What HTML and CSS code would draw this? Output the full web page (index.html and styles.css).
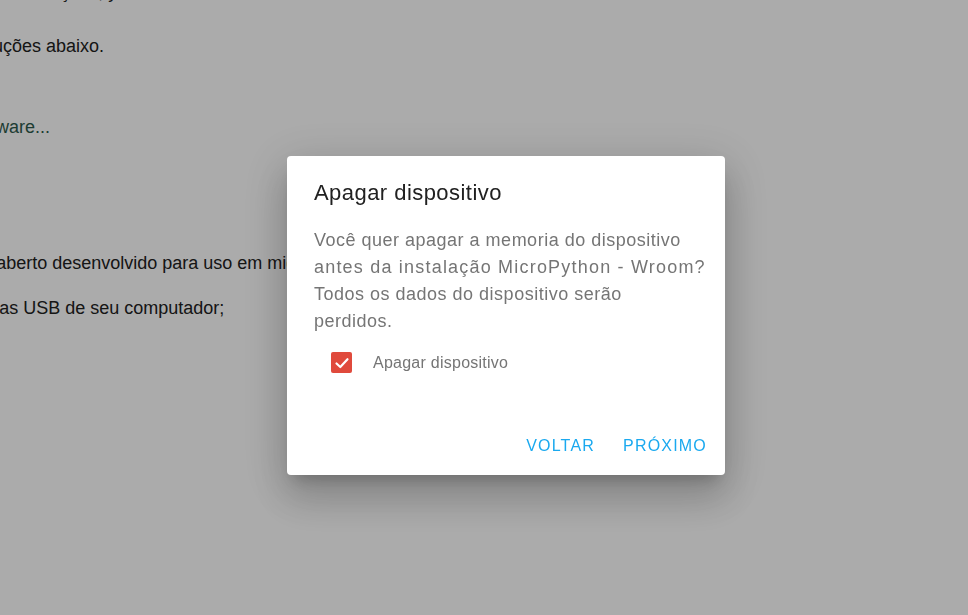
FILE: index.html
```html
<!DOCTYPE html>
<html lang="pt">
<head>
<meta charset="utf-8">
<title>Apagar dispositivo</title>
<link rel="stylesheet" href="styles.css">
</head>
<body>
<main class="page">
  <p class="line l0">Conecte o seu dispositivo e siga as instruções, y</p>
  <p class="line l1">Siga as instruções abaixo.</p>
  <p class="line l2 green">Instalando firmware...</p>
  <p class="line l3">O MicroPython é um firmware de código aberto desenvolvido para uso em microcontroladores</p>
  <p class="line l4">Conecte o dispositivo a uma das portas USB de seu computador;</p>
</main>
<div class="overlay"></div>
<div class="dialog" role="dialog">
  <h2 class="title">Apagar dispositivo</h2>
  <p class="text">Você quer apagar a memoria do dispositivo <span class="wide">antes da instalação MicroPython - Wroom?</span> Todos os dados do dispositivo serão<br>perdidos.</p>
  <label class="check">
    <span class="box"><svg viewBox="0 0 20 20" width="20" height="20"><path d="M4.5 10.5 L8.3 14 L15.5 6.2" fill="none" stroke="#fff" stroke-width="2.2" stroke-linecap="round" stroke-linejoin="round"/></svg></span>
    <span class="label">Apagar dispositivo</span>
  </label>
  <div class="actions">
    <button class="btn">VOLTAR</button>
    <button class="btn">PRÓXIMO</button>
  </div>
</div>
</body>
</html>
```
FILE: styles.css
```css
html, body {
  margin: 0;
  padding: 0;
  width: 968px;
  height: 615px;
  overflow: hidden;
}
body {
  background: #ffffff;
  font-family: "Liberation Sans", Arial, sans-serif;
  color: #212121;
}
.page {
  display: flex;
  flex-direction: column;
  font-size: 18px;
  line-height: 24px;
}
.line {
  margin: 0;
  white-space: nowrap;
}
.l0 { margin-top: -20px; margin-left: -271px; }
.l1 { margin-top: 30px; margin-left: -106px; }
.l2 { margin-top: 57px; margin-left: -122px; }
.l3 { margin-top: 112px; margin-left: -330px; }
.l4 { margin-top: 21px; margin-left: -297px; }
.green { color: #2e5a4c; }

.overlay {
  position: fixed;
  inset: 0;
  background: #000;
  opacity: 0.33;
}
.dialog {
  position: fixed;
  left: 287px;
  top: 156px;
  width: 438px;
  height: 319px;
  box-sizing: border-box;
  background: #fff;
  border-radius: 4px;
  box-shadow: 0 11px 15px -7px rgba(0,0,0,.2), 0 24px 38px 3px rgba(0,0,0,.14), 0 9px 46px 8px rgba(0,0,0,.12);
  padding: 23px 10px 0 27px;
  display: flex;
  flex-direction: column;
}
.title {
  margin: 0;
  font-weight: 400;
  font-size: 22px;
  line-height: 28px;
  letter-spacing: 0.45px;
  color: #212121;
}
.text {
  margin: 20px 0 0;
  font-size: 18px;
  line-height: 27px;
  letter-spacing: 0.5px;
  color: #757575;
}
.wide {
  letter-spacing: 1.2px;
}
.check {
  display: flex;
  align-items: center;
  margin-top: 17px;
  margin-left: 17px;
  gap: 21px;
}
.box {
  width: 21px;
  height: 21px;
  background: #e04a3c;
  border-radius: 2px;
  display: flex;
  align-items: center;
  justify-content: center;
}
.label {
  font-size: 16px;
  letter-spacing: 0.25px;
  color: #757575;
}
.actions {
  margin-top: auto;
  margin-bottom: 19px;
  margin-right: 8px;
  display: flex;
  justify-content: flex-end;
  gap: 28px;
}
.btn {
  background: none;
  border: 0;
  padding: 0;
  font-family: "Liberation Sans", Arial, sans-serif;
  font-size: 16px;
  letter-spacing: 1.2px;
  color: #1aa9ef;
  line-height: 20px;
  cursor: pointer;
}
```
